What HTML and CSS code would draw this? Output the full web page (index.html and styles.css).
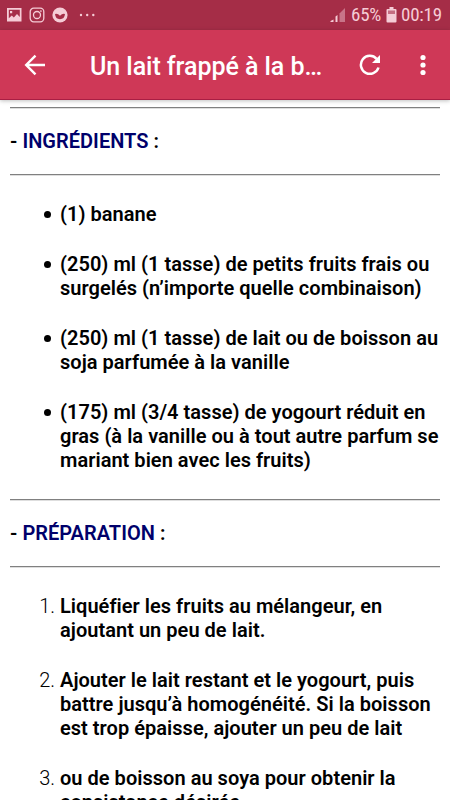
FILE: index.html
```
<!DOCTYPE html>
<html lang="fr">
<head>
    <meta charset="UTF-8">
    <meta name="viewport" content="width=device-width, initial-scale=1.0">
    <title>Un lait frappé à la banane</title>
    <link rel="stylesheet" href="styles.css">
</head>
<body>

    <div class="status-bar">
        <div class="notifications">
            <svg width="16" height="16" viewBox="0 0 16 16">
                <path fill="currentColor" fill-rule="evenodd" d="M1 1h14.500v13.500H1zM2.800 2.800v8.500l3-2.800 2 2 3.200-3.500 2.800 3V2.800zM4 4h2.200v2.200H4z"/>
            </svg>
            <svg width="16" height="16" viewBox="0 0 16 16" fill="none" stroke="currentColor" stroke-width="1.300">
                <rect x="1.200" y="1.200" width="13.600" height="13.600" rx="3.500"/>
                <circle cx="8" cy="8" r="3.500"/>
                <circle cx="11.900" cy="4.100" r=".3"/>
            </svg>
            <svg width="16" height="16" viewBox="0 0 16 16">
                <circle cx="8" cy="8" r="7.600" fill="currentColor"/>
                <path class="smile" d="M3 7q2.500-1 5 1.800 2.500-2.800 5-1.800-.5 5.200-5 5.200t-5-5.200z"/>
            </svg>
            <svg width="18" height="16" viewBox="0 0 18 16" fill="currentColor">
                <circle cx="3" cy="8" r="1.200"/>
                <circle cx="9.200" cy="8" r="1.200"/>
                <circle cx="15.300" cy="8" r="1.200"/>
            </svg>
        </div>
        <div class="system">
            <svg class="signal" width="16" height="16" viewBox="0 0 16 16" fill="currentColor">
                <path d="M.5 15v-1l3-1.500V15zM5.500 15v-5.500l2-1.500v7z"/>
                <path opacity=".45" d="M9.500 15V6.500L15 1v14z"/>
            </svg>
            <span class="percent">65%</span>
            <svg class="battery" width="11" height="16" viewBox="0 0 11 16">
                <path fill="currentColor" d="M3.500 0h4v2H9.500q1 0 1 1v11.500q0 1-1 1h-8q-1 0-1-1V3q0-1 1-1h2z"/>
                <path class="empty" d="M2 3.500h7V7H2z"/>
            </svg>
            <span class="time">00:19</span>
        </div>
    </div>

    <header class="toolbar">
        <svg class="back" width="22" height="22" viewBox="0 0 22 22" fill="none" stroke="currentColor" stroke-width="2.400">
            <path d="M21 11H3M11.500 1.700L2.200 11l9.300 9.300"/>
        </svg>
        <h1 class="title">Un lait frappé à la b…</h1>
        <svg class="refresh" width="22" height="22" viewBox="0 0 22 22">
            <path fill="none" stroke="currentColor" stroke-width="2.500" d="M19.500 13.500A9 9 0 1 1 17.600 4.800"/>
            <path fill="currentColor" d="M21 1v8h-8z"/>
        </svg>
        <svg class="more" width="6" height="22" viewBox="0 0 6 22" fill="currentColor">
            <circle cx="3" cy="3.500" r="2.600"/>
            <circle cx="3" cy="11" r="2.600"/>
            <circle cx="3" cy="18.500" r="2.600"/>
        </svg>
    </header>

    <main class="recipe">
        <hr>
        <h2>- <span class="heading">INGRÉDIENTS</span> :</h2>
        <hr>
        <ul>
            <li><strong>(1) banane</strong></li>
            <li><strong>(250) ml (1 tasse) de petits fruits frais ou<br>surgelés (n’importe quelle combinaison)</strong></li>
            <li><strong>(250) ml (1 tasse) de lait ou de boisson au<br>soja parfumée à la vanille</strong></li>
            <li><strong>(175) ml (3/4 tasse) de yogourt réduit en<br>gras (à la vanille ou à tout autre parfum se<br>mariant bien avec les fruits)</strong></li>
        </ul>
        <hr>
        <h2>- <span class="heading">PRÉPARATION</span> :</h2>
        <hr>
        <ol>
            <li><strong>Liquéfier les fruits au mélangeur, en<br>ajoutant un peu de lait.</strong></li>
            <li><strong>Ajouter le lait restant et le yogourt, puis<br>battre jusqu’à homogénéité. Si la boisson<br>est trop épaisse, ajouter un peu de lait</strong></li>
            <li><strong>ou de boisson au soya pour obtenir la<br>consistance désirée.</strong></li>
        </ol>
    </main>

</body>
</html>
```
FILE: styles.css
```
body {
    margin: 0;
    height: 800px;
    display: flex;
    flex-direction: column;
    overflow: hidden;
    background-color: #fff;
    color: #000;
    font-family: Roboto, sans-serif;
}

svg {
    display: block;
    flex-shrink: 0;
}

/* Android status bar */
.status-bar {
    height: 30px;
    flex-shrink: 0;
    display: flex;
    justify-content: space-between;
    align-items: center;
    box-sizing: border-box;
    padding: 0 8px 0 6px;
    background-color: #a52d47;
    color: #f5ccd6;
}

.notifications,
.system {
    display: flex;
    align-items: center;
}

.notifications {
    gap: 7px;
}

.notifications svg:last-child {
    margin-left: 3px;
}

.smile,
.empty {
    fill: #a52d47;
}

.empty {
    opacity: 0.6;
}

.percent,
.time {
    font-size: 19px;
    font-stretch: 75%;
    letter-spacing: -0.2px;
    line-height: 32px;
    white-space: nowrap;
}

.signal {
    margin-right: 5px;
}

.percent {
    width: 30px;
}

.battery {
    margin: 0 4px 0 5px;
}

.time {
    width: 41px;
}

/* App toolbar */
.toolbar {
    height: 70px;
    flex-shrink: 0;
    display: flex;
    align-items: center;
    box-sizing: border-box;
    padding: 0 24px 0 24px;
    background-color: #cf3857;
    border-bottom: 1px solid #a91e43;
    box-shadow: 0 1px 4px rgba(0, 0, 0, 0.25);
    color: #fff;
}

.title {
    width: 232px;
    margin: 3px 37px 0 44px;
    font-size: 25px;
    font-weight: 500;
    letter-spacing: -0.05px;
    white-space: nowrap;
}

.more {
    margin-left: 39px;
}

/* Recipe text */
.recipe {
    padding: 7px 10px 0;
    font-size: 20px;
    line-height: 24px;
    letter-spacing: 0.03px;
}

hr {
    margin: 0;
    height: 0;
    border: 0;
    border-top: 1px solid #808080;
    border-bottom: 1px solid #dedede;
}

h2 {
    margin: 20px 0 21px;
    font-size: 20px;
    font-weight: 600;
    line-height: 24px;
}

.heading {
    color: #00006b;
}

ul, ol {
    margin: 26px -10px 27px 0;
    padding-left: 50px;
}

ul {
    list-style: none;
}

/* Round bullets */
ul li::before {
    content: "";
    display: inline-block;
    width: 7px;
    height: 7px;
    margin: 0 9px 0 -16px;
    border-radius: 50%;
    background-color: #000;
    vertical-align: 3px;
}

li {
    margin-bottom: 26px;
    white-space: nowrap;
}

li::marker {
    font-weight: 300;
}

strong {
    font-weight: 600;
}
```
